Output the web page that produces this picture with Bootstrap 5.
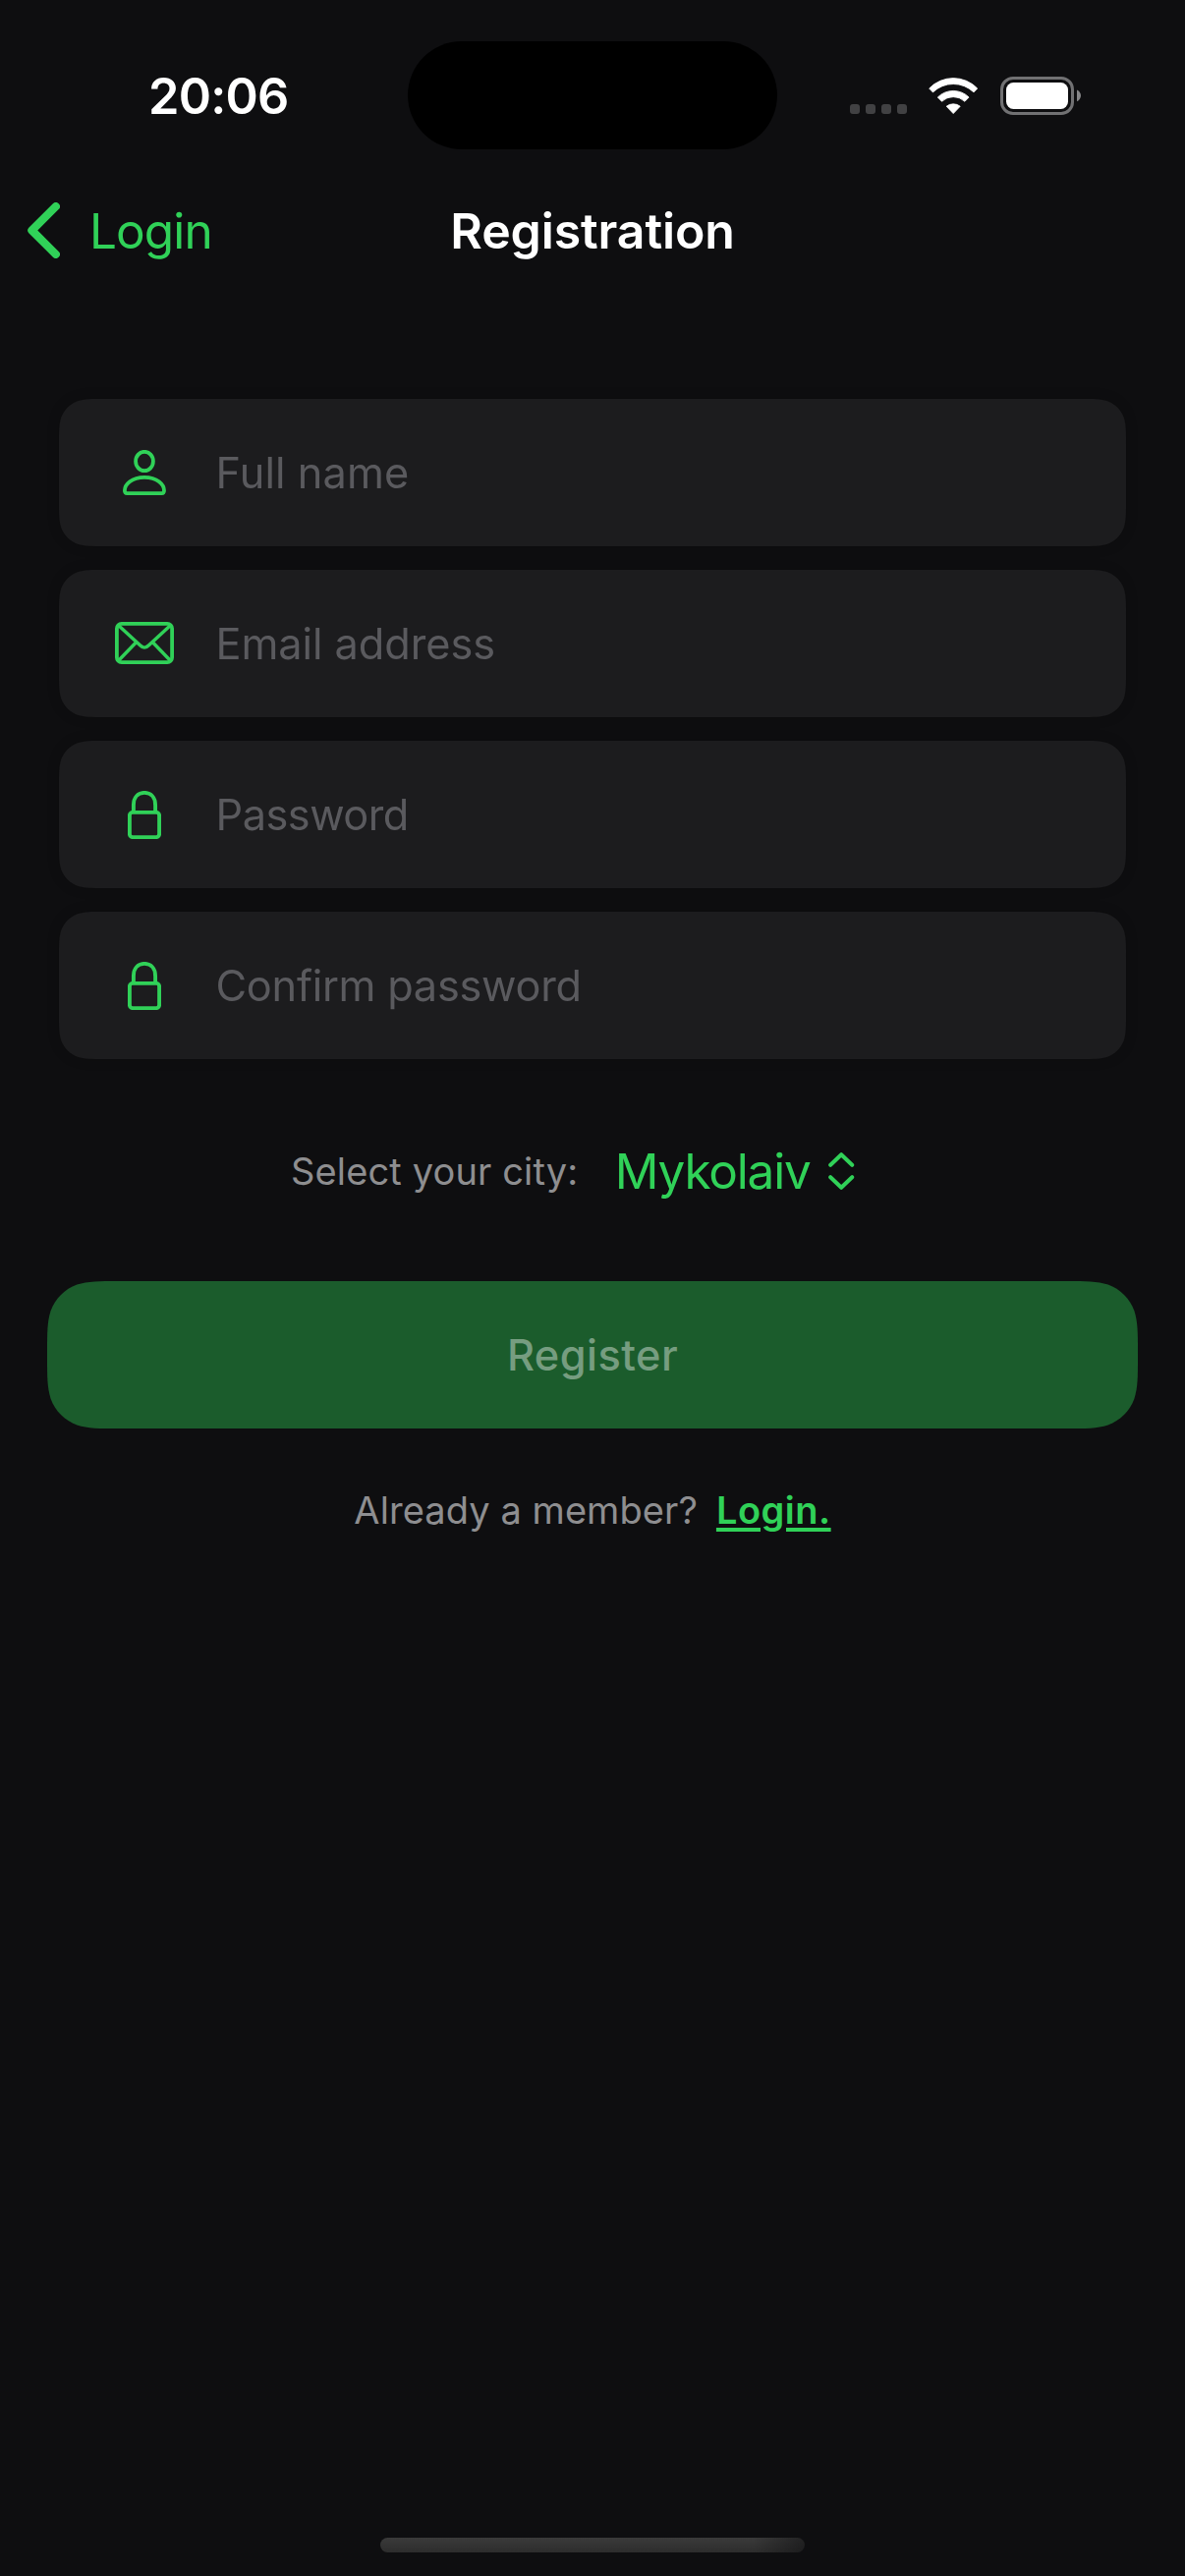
<!DOCTYPE html>
<html lang="en" data-bs-theme="dark">
<head>
<meta charset="utf-8">
<meta name="viewport" content="width=device-width, initial-scale=1">
<title>Registration</title>
<link href="https://cdn.jsdelivr.net/npm/bootstrap@5.3.0/dist/css/bootstrap.min.css" rel="stylesheet">
<style>
  :root { --app-bg: #0e0e10; --app-green: #30d158; --app-field: #1c1c1e; --app-gray: #8e8e90; }
  body { background: var(--app-bg); font-family: Inter, "Liberation Sans", sans-serif; color: #fff; }
  svg { display: block; flex: none; }
  .screen { min-height: 2622px; width: 1206px; }
  .tint { color: var(--app-green); }

  .status-bar { height: 194px; }
  .clock { width: 415px; padding: 1px 0 0 151px; font-size: 50.5px; font-weight: 600; letter-spacing: -.8px; line-height: 60px; }
  .island { width: 376px; height: 110px; background: #000; }
  .status-icons { padding-left: 74px; }
  .status-icons .wifi { margin-left: 22.3px; }
  .status-icons .battery { margin-left: 22px; }

  .top-bar { height: 81px; padding: 0 28px; }
  .top-bar .side { flex: 1 1 0; }
  .back { font-size: 49.5px; line-height: 60px; letter-spacing: -.9px; gap: 30px; }
  .page-title { font-weight: 600; letter-spacing: -.12px; margin: 0; font-size: 50px; line-height: 60px; }

  .fields { margin: 131px 60px 0; gap: 24px; }
  .shade { filter: drop-shadow(0 0 6px rgba(0, 0, 0, .18)); }
  .field { height: 150px; padding-left: 57px; gap: 42.5px; background: var(--app-field); color: #5a5a5e; font-size: 43.3px; line-height: 52px;
    clip-path: path("M45.9 0H1040.1C1053.3 0 1059.9 0 1067.1 2.2C1074.8 5.1 1080.9 11.2 1083.8 18.9C1086 26.1 1086 32.7 1086 45.9V104.1C1086 117.3 1086 123.9 1083.8 131.1C1080.9 138.8 1074.8 144.9 1067.1 147.8C1059.9 150 1053.3 150 1040.1 150H45.9C32.7 150 26.1 150 18.9 147.8C11.2 144.9 5.1 138.8 2.2 131.1C0 123.9 0 117.3 0 104.1V45.9C0 32.7 0 26.1 2.2 18.9C5.1 11.2 11.2 5.1 18.9 2.2C26.1 0 32.7 0 45.9 0Z"); }
  .field-icon { width: 60px; }
  .ls-a { letter-spacing: .1px; }
  .ls-b { letter-spacing: -.06px; }
  .ls-c { letter-spacing: -.5px; }
  .ls-d { letter-spacing: -.26px; }

  .city-row { height: 226px; padding: 2px 0 0 296px; }
  .city-label { color: var(--app-gray); font-size: 38px; letter-spacing: .14px; line-height: 46px; }
  .city-picker { margin-left: 37.5px; gap: 18px; font-size: 49.5px; letter-spacing: -1.2px; line-height: 60px; }

  .btn-register { margin: 0 48px; height: 150px; border: 0; font-size: 43.3px; font-weight: 500; letter-spacing: .47px;
    --bs-btn-disabled-bg: #1b5c2c; --bs-btn-disabled-color: #769d80; --bs-btn-disabled-opacity: 1; --bs-btn-border-radius: 0;
    clip-path: path("M73.4 0H1036.6C1057.8 0 1068.3 0 1079.7 3.6C1092.1 8.1 1101.9 17.9 1106.4 30.3C1110 41.7 1110 52.2 1110 73.4V76.6C1110 97.8 1110 108.3 1106.4 119.7C1101.9 132.1 1092.1 141.9 1079.7 146.4C1068.3 150 1057.8 150 1036.6 150H73.4C52.2 150 41.7 150 30.3 146.4C17.9 141.9 8.1 132.1 3.6 119.7C0 108.3 0 97.8 0 76.6V73.4C0 52.2 0 41.7 3.6 30.3C8.1 17.9 17.9 8.1 30.3 3.6C41.7 0 52.2 0 73.4 0Z"); }

  .member { margin-top: 60px; gap: 19px; font-size: 38px; line-height: 46px; letter-spacing: .07px; color: var(--app-gray); }
  .member a { font-weight: 600; letter-spacing: .5px; text-decoration: underline; text-decoration-thickness: 4px; text-underline-offset: 4px; }

  .home-bar { width: 432px; height: 15px; margin-bottom: 24px;
    background: linear-gradient(90deg, rgba(14,14,16,0) 88%, rgba(14,14,16,.55) 100%), linear-gradient(#3a3a3a, #2d2d2d); }
</style>
<script src="https://cdn.jsdelivr.net/npm/bootstrap@5.3.0/dist/js/bootstrap.bundle.min.js"></script>
</head>
<body>
<div class="screen d-flex flex-column">

  <header class="status-bar d-flex align-items-center">
    <div class="clock">20:06</div>
    <div class="island rounded-pill"></div>
    <div class="status-icons d-flex align-items-center">
      <svg width="58" height="39" viewBox="0 0 58 39" fill="#414143">
        <rect x="0" y="28" width="10" height="10" rx="3"/><rect x="16" y="28" width="10" height="10" rx="3"/>
        <rect x="32" y="28" width="10" height="10" rx="3"/><rect x="48" y="28" width="10" height="10" rx="3"/>
      </svg>
      <svg class="wifi" width="51" height="39" viewBox="0 0 51 39" fill="#fff" stroke="#fff" stroke-width=".8" stroke-linejoin="round">
        <path d="M.7 12A34 34 0 0 1 49.7 12L46 15.9A30 30 0 0 0 4.4 15.9Z"/>
        <path d="M9.3 21A22.5 22.5 0 0 1 41.1 21L36.9 25.3A17 17 0 0 0 13.5 25.3Z"/>
        <path d="M18.2 30.2A11.5 11.5 0 0 1 32.2 30.2L25.2 37.6Z"/>
      </svg>
      <svg class="battery" width="83" height="39" viewBox="0 0 83 39">
        <rect x="1.5" y="1.5" width="72" height="36" rx="11.5" fill="none" stroke="#717173" stroke-width="3"/>
        <rect x="6" y="6" width="63" height="27" rx="7.5" fill="#fff"/>
        <path d="M78 13.5C80.5 14.5 82 17 82 19.3S80.5 24.2 78 25.2Z" fill="#868688"/>
      </svg>
    </div>
  </header>

  <nav class="top-bar d-flex align-items-center">
    <div class="side">
      <a href="#" class="back tint text-decoration-none d-flex align-items-center">
        <svg width="33" height="57" viewBox="0 0 33 57" fill="none" stroke="currentColor" stroke-width="8.2" stroke-linecap="round" stroke-linejoin="round"><path d="M28.8 4.2L4.4 28.5L28.8 52.8"/></svg>
        <span>Login</span>
      </a>
    </div>
    <h1 class="page-title">Registration</h1>
    <div class="side"></div>
  </nav>

  <main class="d-flex flex-column">
    <div class="fields d-flex flex-column">
      <div class="shade"><div class="field d-flex align-items-center">
        <div class="field-icon tint d-flex justify-content-center">
          <svg width="44" height="46" viewBox="0 0 44 46" fill="none" stroke="currentColor" stroke-width="3.8"><ellipse cx="22" cy="11.5" rx="8.9" ry="9.7"/><path d="M1.9 41.3C1.9 35 9 27.9 22 27.9S42 35 42 41.3C42 43.4 41 44.1 39.6 44.1H4.3C2.8 44.1 1.9 43.4 1.9 41.3Z"/></svg>
        </div>
        <span class="ls-a">Full name</span>
      </div></div>
      <div class="shade"><div class="field d-flex align-items-center">
        <div class="field-icon tint d-flex justify-content-center">
          <svg width="60" height="44" viewBox="0 0 60 44" fill="none" stroke="currentColor" stroke-width="3.8"><rect x="1.9" y="1.9" width="56.2" height="39.2" rx="4.8"/><path stroke-width="3.4" d="M3.5 3.5L25.5 23.8Q30 28.4 34.5 23.8L56.5 3.5M3.5 39.5L21.6 20.8M56.5 39.5L38.4 20.8"/></svg>
        </div>
        <span class="ls-b">Email address</span>
      </div></div>
      <div class="shade"><div class="field d-flex align-items-center">
        <div class="field-icon tint d-flex justify-content-center">
          <svg width="34" height="49" viewBox="0 0 34 49" fill="none" stroke="currentColor" stroke-width="3.9"><rect x="1.9" y="21.9" width="30.2" height="25.2" rx="3"/><path d="M5.9 21V14.5C5.9 6.5 10.5 1.9 17 1.9S28.1 6.5 28.1 14.5V21"/></svg>
        </div>
        <span class="ls-c">Password</span>
      </div></div>
      <div class="shade"><div class="field d-flex align-items-center">
        <div class="field-icon tint d-flex justify-content-center">
          <svg width="34" height="49" viewBox="0 0 34 49" fill="none" stroke="currentColor" stroke-width="3.9"><rect x="1.9" y="21.9" width="30.2" height="25.2" rx="3"/><path d="M5.9 21V14.5C5.9 6.5 10.5 1.9 17 1.9S28.1 6.5 28.1 14.5V21"/></svg>
        </div>
        <span class="ls-d">Confirm password</span>
      </div></div>
    </div>

    <div class="city-row d-flex align-items-center">
      <span class="city-label">Select your city:</span>
      <div class="city-picker tint d-flex align-items-center" role="button">
        <span>Mykolaiv</span>
        <svg width="27" height="38" viewBox="0 0 27 38" fill="none" stroke="currentColor" stroke-width="4" stroke-linecap="round" stroke-linejoin="round"><path d="M2.2 12.8L13.2 2.2L24.2 12.8M2.2 25.2L13.2 35.8L24.2 25.2"/></svg>
      </div>
    </div>

    <button type="button" class="btn btn-register" disabled>Register</button>

    <div class="member d-flex justify-content-center">
      <span>Already a member?</span>
      <a href="#" class="tint">Login.</a>
    </div>
  </main>

  <div class="home-bar rounded-pill mt-auto align-self-center"></div>
</div>
</body>
</html>
